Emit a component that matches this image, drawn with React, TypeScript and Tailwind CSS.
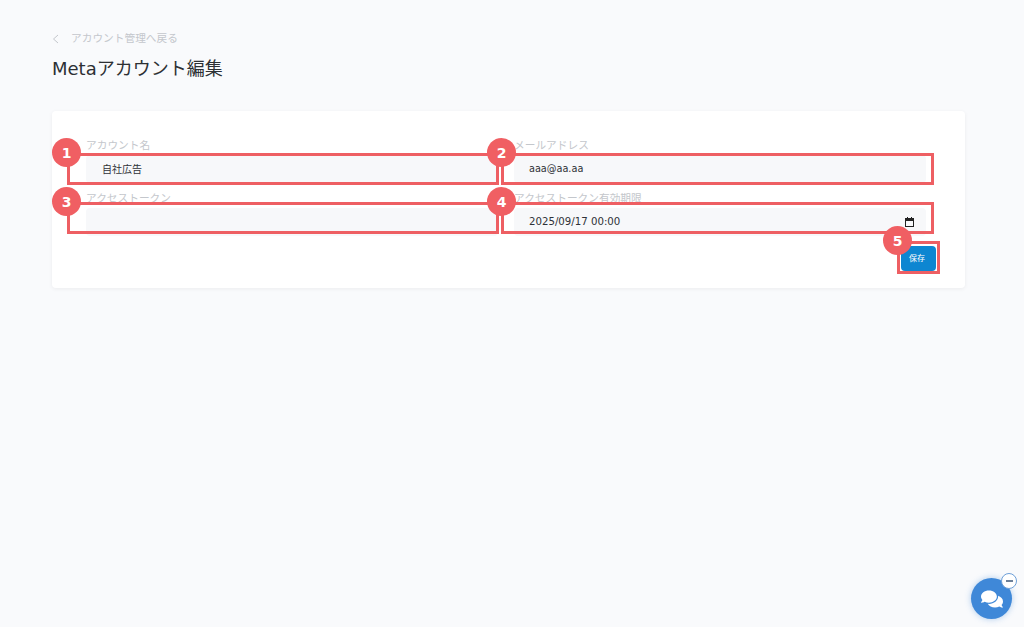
import { FaComments } from "react-icons/fa";

const font = "font-['DejaVu_Sans','Noto_Sans_CJK_JP',sans-serif]";

function Field({
  label,
  value,
  date,
  latin,
}: {
  label: string;
  value?: string;
  date?: boolean;
  latin?: boolean;
}) {
  return (
    <div className="flex flex-col">
      <label className="h-[18px] text-[10.7px] leading-[18px] text-[#c4c7cc]">
        {label}
      </label>
      <div
        className={`flex h-[28px] items-center justify-between rounded bg-[#f7f8fa] pr-[12px] text-[#2f3238] ${
          date
            ? "pl-[15px] text-[10.2px]"
            : latin
              ? "pl-[15px] text-[9.7px]"
              : "pl-[16px] text-[10px]"
        }`}
      >
        <span>{value}</span>
        {date && (
          <svg width="9" height="10" viewBox="0 0 9 10">
            <rect x="0.5" y="1.5" width="8" height="8" fill="none" stroke="#222" />
            <rect x="0" y="1" width="9" height="3" fill="#222" />
            <rect x="2" y="0" width="1" height="2" fill="#222" />
            <rect x="6" y="0" width="1" height="2" fill="#222" />
          </svg>
        )}
      </div>
    </div>
  );
}

function Marker({ n, className }: { n: number; className: string }) {
  return (
    <div
      className={`absolute flex h-[29px] w-[29px] items-center justify-center rounded-full bg-[#f05f63] pt-[2px] text-[14px] font-bold text-white ${className}`}
    >
      {n}
    </div>
  );
}

export default function App() {
  return (
    <div className={`relative h-[627px] w-[1024px] overflow-hidden bg-[#f9fafc] ${font}`}>
      <div className="px-[52px] pt-[30px]">
        {/* back link */}
        <div className="flex h-[18px] items-center gap-[12px] text-[10.7px] text-[#c4c7cc]">
          <svg width="7" height="10" viewBox="0 0 7 10" fill="none" stroke="#c4c7cc" strokeWidth="1">
            <polyline points="6,1 1.5,5 6,9" />
          </svg>
          <span>アカウント管理へ戻る</span>
        </div>
        <h1 className="mt-[8px] text-[18px] leading-[26px] text-[#2d3034]">
          Metaアカウント編集
        </h1>

        {/* form card */}
        <div className="mt-[29px] h-[177px] w-[913px] rounded bg-white pl-[34px] pr-[29px] pt-[26px] shadow-[0_1px_4px_rgba(0,0,0,0.06)]">
          <div className="grid grid-cols-[412px_412px] gap-x-[16px] gap-y-[7px]">
            <Field label="アカウント名" value="自社広告" />
            <Field label="メールアドレス" value="aaa@aa.aa" latin />
            <Field label="アクセストークン" />
            <Field label="アクセストークン有効期限" value="2025/09/17 00:00" date latin />
          </div>
          <div className="mt-[10px] flex justify-end">
            <button className="h-[25px] w-[35px] rounded-sm bg-[#0d86d1] pr-[3px] text-[8px] text-white">
              保存
            </button>
          </div>
        </div>
      </div>

      {/* annotations */}
      <div className="absolute left-[67px] top-[153px] h-[32px] w-[432px] border-[3px] border-[#ee5f63]" />
      <div className="absolute left-[501px] top-[153px] h-[32px] w-[433px] border-[3px] border-[#ee5f63]" />
      <div className="absolute left-[67px] top-[202px] h-[32px] w-[432px] border-[3px] border-[#ee5f63]" />
      <div className="absolute left-[501px] top-[202px] h-[32px] w-[433px] border-[3px] border-[#ee5f63]" />
      <div className="absolute left-[897px] top-[241px] h-[33px] w-[43px] border-[3px] border-[#ee5f63]" />
      <Marker n={1} className="left-[52px] top-[138px]" />
      <Marker n={2} className="left-[487px] top-[138px]" />
      <Marker n={3} className="left-[52px] top-[187px]" />
      <Marker n={4} className="left-[487px] top-[187px]" />
      <Marker n={5} className="left-[883px] top-[226px]" />

      {/* chat widget */}
      <div className="absolute left-[971px] top-[578px] flex h-[41px] w-[41px] items-center justify-center rounded-full bg-[#3f88d8] shadow-[0_0_6px_rgba(63,136,216,0.4)]">
        <FaComments size={22} color="white" />
      </div>
      <div className="absolute left-[1001px] top-[573px] flex h-[16px] w-[16px] items-center justify-center rounded-full border border-[#6d9fd8] bg-white">
        <div className="h-[1.5px] w-[7px] bg-[#6b7f99]" />
      </div>
    </div>
  );
}
